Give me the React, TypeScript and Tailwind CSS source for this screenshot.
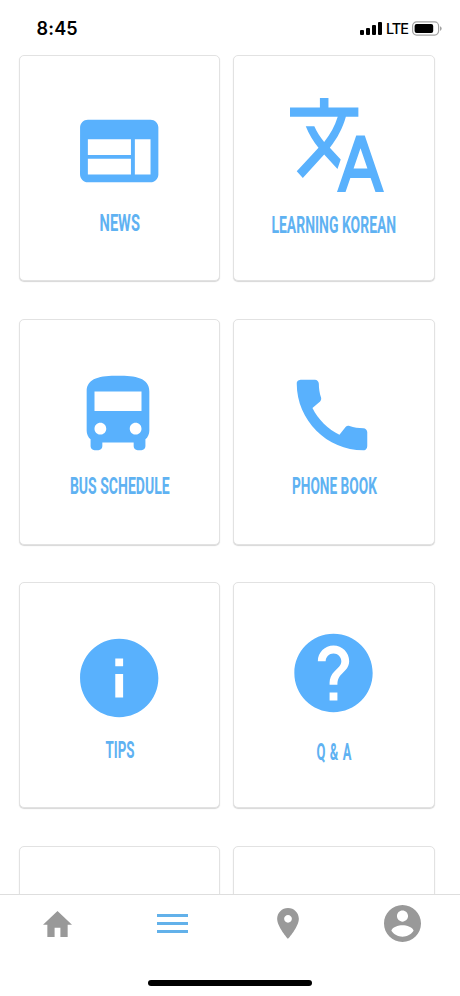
import { useLayoutEffect, useRef, useState, type ReactNode } from 'react';

type Tile = {
  label: string;
  labelWidth: number;
  labelClass: string;
  padClass: string;
  icon: ReactNode;
};

const iconBox = 'block h-[94px] w-[94px] shrink-0 fill-[#59b1fd]';

const NewsIcon = () => (
  <svg viewBox="0 0 24 24" className={`${iconBox} -translate-x-[0.8px]`}>
    <path d="M20 4H4c-1.1 0-1.99.9-1.99 2L2 18c0 1.1.9 2 2 2h16c1.1 0 2-.9 2-2V6c0-1.1-.9-2-2-2zm-5 14H4v-4h11v4zm0-5H4V9h11v4zm5 5h-4V9h4v9z" />
  </svg>
);

const TranslateIcon = () => (
  <svg viewBox="1 2 22 20" preserveAspectRatio="none" className={`${iconBox} translate-x-[3px]`}>
    <path d="M12.87 15.07l-2.54-2.51.03-.03c1.74-1.94 2.98-4.17 3.71-6.53H17V4h-7V2H8v2H1v1.99h11.17C11.5 7.92 10.44 9.75 9 11.35 8.07 10.32 7.3 9.19 6.69 8h-2c.73 1.63 1.73 3.17 2.98 4.56l-5.09 5.02L4 19l5-5 3.11 3.11.76-2.04zM18.5 10h-2L12 22h2l1.12-3h4.75L21 22h2l-4.5-12zm-2.62 7l1.62-4.33L19.12 17h-3.24z" />
  </svg>
);

const BusIcon = () => (
  <svg viewBox="0 0 24 24" className={`${iconBox} -translate-x-[2px]`}>
    <path d="M4 16c0 .88.39 1.67 1 2.22V20c0 .55.45 1 1 1h1c.55 0 1-.45 1-1v-1h8v1c0 .55.45 1 1 1h1c.55 0 1-.45 1-1v-1.78c.61-.55 1-1.34 1-2.22V6c0-3.5-3.58-4-8-4s-8 .5-8 4v10zm3.5 1c-.83 0-1.5-.67-1.5-1.5S6.67 14 7.5 14s1.5.67 1.5 1.5S8.33 17 7.5 17zm9 0c-.83 0-1.5-.67-1.5-1.5s.67-1.5 1.5-1.5 1.5.67 1.5 1.5-.67 1.5-1.5 1.5zm1.5-6H6V6h12v5z" />
  </svg>
);

const PhoneIcon = () => (
  <svg viewBox="0 0 24 24" className={`${iconBox} -translate-x-[2px]`}>
    <path d="M20.01 15.38c-1.23 0-2.42-.2-3.53-.56-.35-.12-.74-.03-1.01.24l-1.57 1.97c-2.83-1.35-5.48-3.9-6.89-6.83l1.95-1.66c.27-.28.35-.67.24-1.02-.37-1.11-.56-2.3-.56-3.53 0-.54-.45-.99-.99-.99H4.19C3.65 3 3 3.24 3 3.99 3 13.28 10.73 21 20.01 21c.71 0 .99-.63.99-1.18v-3.45c0-.54-.45-.99-.99-.99z" />
  </svg>
);

const InfoIcon = () => (
  <svg viewBox="0 0 24 24" className={`${iconBox} -translate-x-[0.8px]`}>
    <path d="M12 2C6.48 2 2 6.48 2 12s4.48 10 10 10 10-4.48 10-10S17.52 2 12 2zm1 15h-2v-6h2v6zm0-8h-2V7h2v2z" />
  </svg>
);

const HelpIcon = () => (
  <svg viewBox="0 0 24 24" className={`${iconBox} -translate-x-[0.5px]`}>
    <path d="M12 2C6.48 2 2 6.48 2 12s4.48 10 10 10 10-4.48 10-10S17.52 2 12 2zm1 17h-2v-2h2v2zm2.07-7.75l-.9.92C13.45 12.9 13 13.5 13 15h-2v-.5c0-1.1.45-2.1 1.17-2.83l1.24-1.26c.37-.36.59-.86.59-1.41 0-1.1-.9-2-2-2s-2 .9-2 2H8c0-2.21 1.79-4 4-4s4 1.79 4 4c0 .88-.36 1.68-.93 2.25z" />
  </svg>
);

const tiles: Tile[] = [
  { label: 'NEWS', labelWidth: 40, labelClass: 'mt-[11px] font-bold', padClass: 'pt-[48px]', icon: <NewsIcon /> },
  { label: 'LEARNING KOREAN', labelWidth: 125, labelClass: 'mt-[19px] font-bold', padClass: 'pt-[42px]', icon: <TranslateIcon /> },
  { label: 'BUS SCHEDULE', labelWidth: 100, labelClass: 'mt-[10px] font-bold', padClass: 'pt-[48px]', icon: <BusIcon /> },
  { label: 'PHONE BOOK', labelWidth: 85, labelClass: 'mt-[10px] font-bold', padClass: 'pt-[48px]', icon: <PhoneIcon /> },
  { label: 'TIPS', labelWidth: 29, labelClass: 'mt-[10.5px] font-bold', padClass: 'pt-[48px]', icon: <InfoIcon /> },
  { label: 'Q & A', labelWidth: 36, labelClass: 'mt-[18px] pl-[1px] font-bold tracking-[1px]', padClass: 'pt-[43px]', icon: <HelpIcon /> },
];

// Condenses a label horizontally until it occupies the given width.
function CondensedLabel({ text, width, className }: { text: string; width: number; className: string }) {
  const ref = useRef<HTMLSpanElement>(null);
  const [scale, setScale] = useState(0.6);
  useLayoutEffect(() => {
    if (ref.current) setScale(width / ref.current.offsetWidth);
  }, [width]);
  return (
    <span
      ref={ref}
      className={`block font-['Roboto','Liberation_Sans',sans-serif] text-[23px] leading-[30px] whitespace-nowrap text-[#5fb2f2] ${className}`}
      style={{ transform: `scaleX(${scale})` }}
    >
      {text}
    </span>
  );
}

const cardClass =
  'flex h-[226px] flex-col items-center rounded-[5px] border border-[#e2e2e2] bg-white shadow-[0_1px_1px_rgba(0,0,0,0.16)]';

function StatusBar() {
  return (
    <header className="flex h-[55px] shrink-0 items-start justify-between pt-[16px] pr-[18px] pl-[36.5px]">
      <span className="font-['Inter',sans-serif] text-[18px] leading-[25px] font-semibold tracking-[0.2px] text-black">8:45</span>
      <div className="flex h-[25px] items-center">
        <div className="flex h-[13px] items-end gap-[2px]">
          <i className="h-[5px] w-[4px] rounded-[1px] bg-black" />
          <i className="h-[7px] w-[4px] rounded-[1px] bg-black" />
          <i className="h-[10px] w-[4px] rounded-[1px] bg-black" />
          <i className="h-[13px] w-[4px] rounded-[1px] bg-black" />
        </div>
        <span className="mr-[4px] ml-[4px] font-['Inter',sans-serif] text-[14.5px] leading-[25px] font-medium tracking-[-1px] text-black">LTE</span>
        <svg viewBox="0 0 30 15" className="h-[15px] w-[30px]">
          <rect x="0.6" y="0.9" width="26" height="13.2" rx="4" fill="none" stroke="#a3a3a3" strokeWidth="1.2" />
          <rect x="2.6" y="2.9" width="18.6" height="9.2" rx="2" fill="#000" />
          <path d="M28 5.2c1.1.4 1.7 1.3 1.7 2.3s-.6 1.9-1.7 2.3z" fill="#a3a3a3" />
        </svg>
      </div>
    </header>
  );
}

function TabBar() {
  const tab = 'flex h-[57px] items-center justify-center';
  return (
    <nav className="flex h-[102px] shrink-0 flex-col border-t border-[#dedede] bg-white">
      <div className="grid grid-cols-4">
        <div className={tab}>
          <svg viewBox="2 3 20 17" preserveAspectRatio="none" className="h-[26px] w-[29px] fill-[#999999]">
            <path d="M10 20v-6h4v6h5v-8h3L12 3 2 12h3v8z" />
          </svg>
        </div>
        <div className={tab}>
          <div className="flex w-[31px] flex-col gap-[5px]">
            <i className="h-[3px] bg-[#62b1ea]" />
            <i className="h-[3px] bg-[#62b1ea]" />
            <i className="h-[3px] bg-[#62b1ea]" />
          </div>
        </div>
        <div className={tab}>
          <svg viewBox="5 2 14 20" className="h-[31px] w-[22px] fill-[#999999]">
            <path d="M12 2C8.13 2 5 5.13 5 9c0 5.25 7 13 7 13s7-7.75 7-13c0-3.87-3.13-7-7-7zm0 9.5c-1.38 0-2.5-1.12-2.5-2.5s1.12-2.5 2.5-2.5 2.5 1.12 2.5 2.5-1.12 2.5-2.5 2.5z" />
          </svg>
        </div>
        <div className={tab}>
          <svg viewBox="2 2 20 20" className="h-[37px] w-[37px] fill-[#999999]">
            <path d="M12 2C6.48 2 2 6.48 2 12s4.48 10 10 10 10-4.48 10-10S17.52 2 12 2zm0 3c1.66 0 3 1.34 3 3s-1.34 3-3 3-3-1.34-3-3 1.34-3 3-3zm0 14.2c-2.5 0-4.71-1.28-6-3.22.03-1.99 4-3.08 6-3.08 1.99 0 5.97 1.09 6 3.08-1.29 1.94-3.5 3.22-6 3.22z" />
          </svg>
        </div>
      </div>
      <div className="mx-auto mt-[28px] h-[6px] w-[164px] rounded-full bg-black" />
    </nav>
  );
}

export default function App() {
  return (
    <div className="flex h-[996px] w-[460px] flex-col overflow-hidden bg-white">
      <StatusBar />
      <main className="min-h-0 flex-1 overflow-hidden">
        <div className="grid grid-cols-[201.4px_201.4px] gap-x-[13px] gap-y-[37.6px] pl-[19px]">
          {tiles.map((t) => (
            <section key={t.label} className={`${cardClass} ${t.padClass}`}>
              {t.icon}
              <CondensedLabel text={t.label} width={t.labelWidth} className={t.labelClass} />
            </section>
          ))}
          <section className={cardClass} />
          <section className={cardClass} />
        </div>
      </main>
      <TabBar />
    </div>
  );
}
